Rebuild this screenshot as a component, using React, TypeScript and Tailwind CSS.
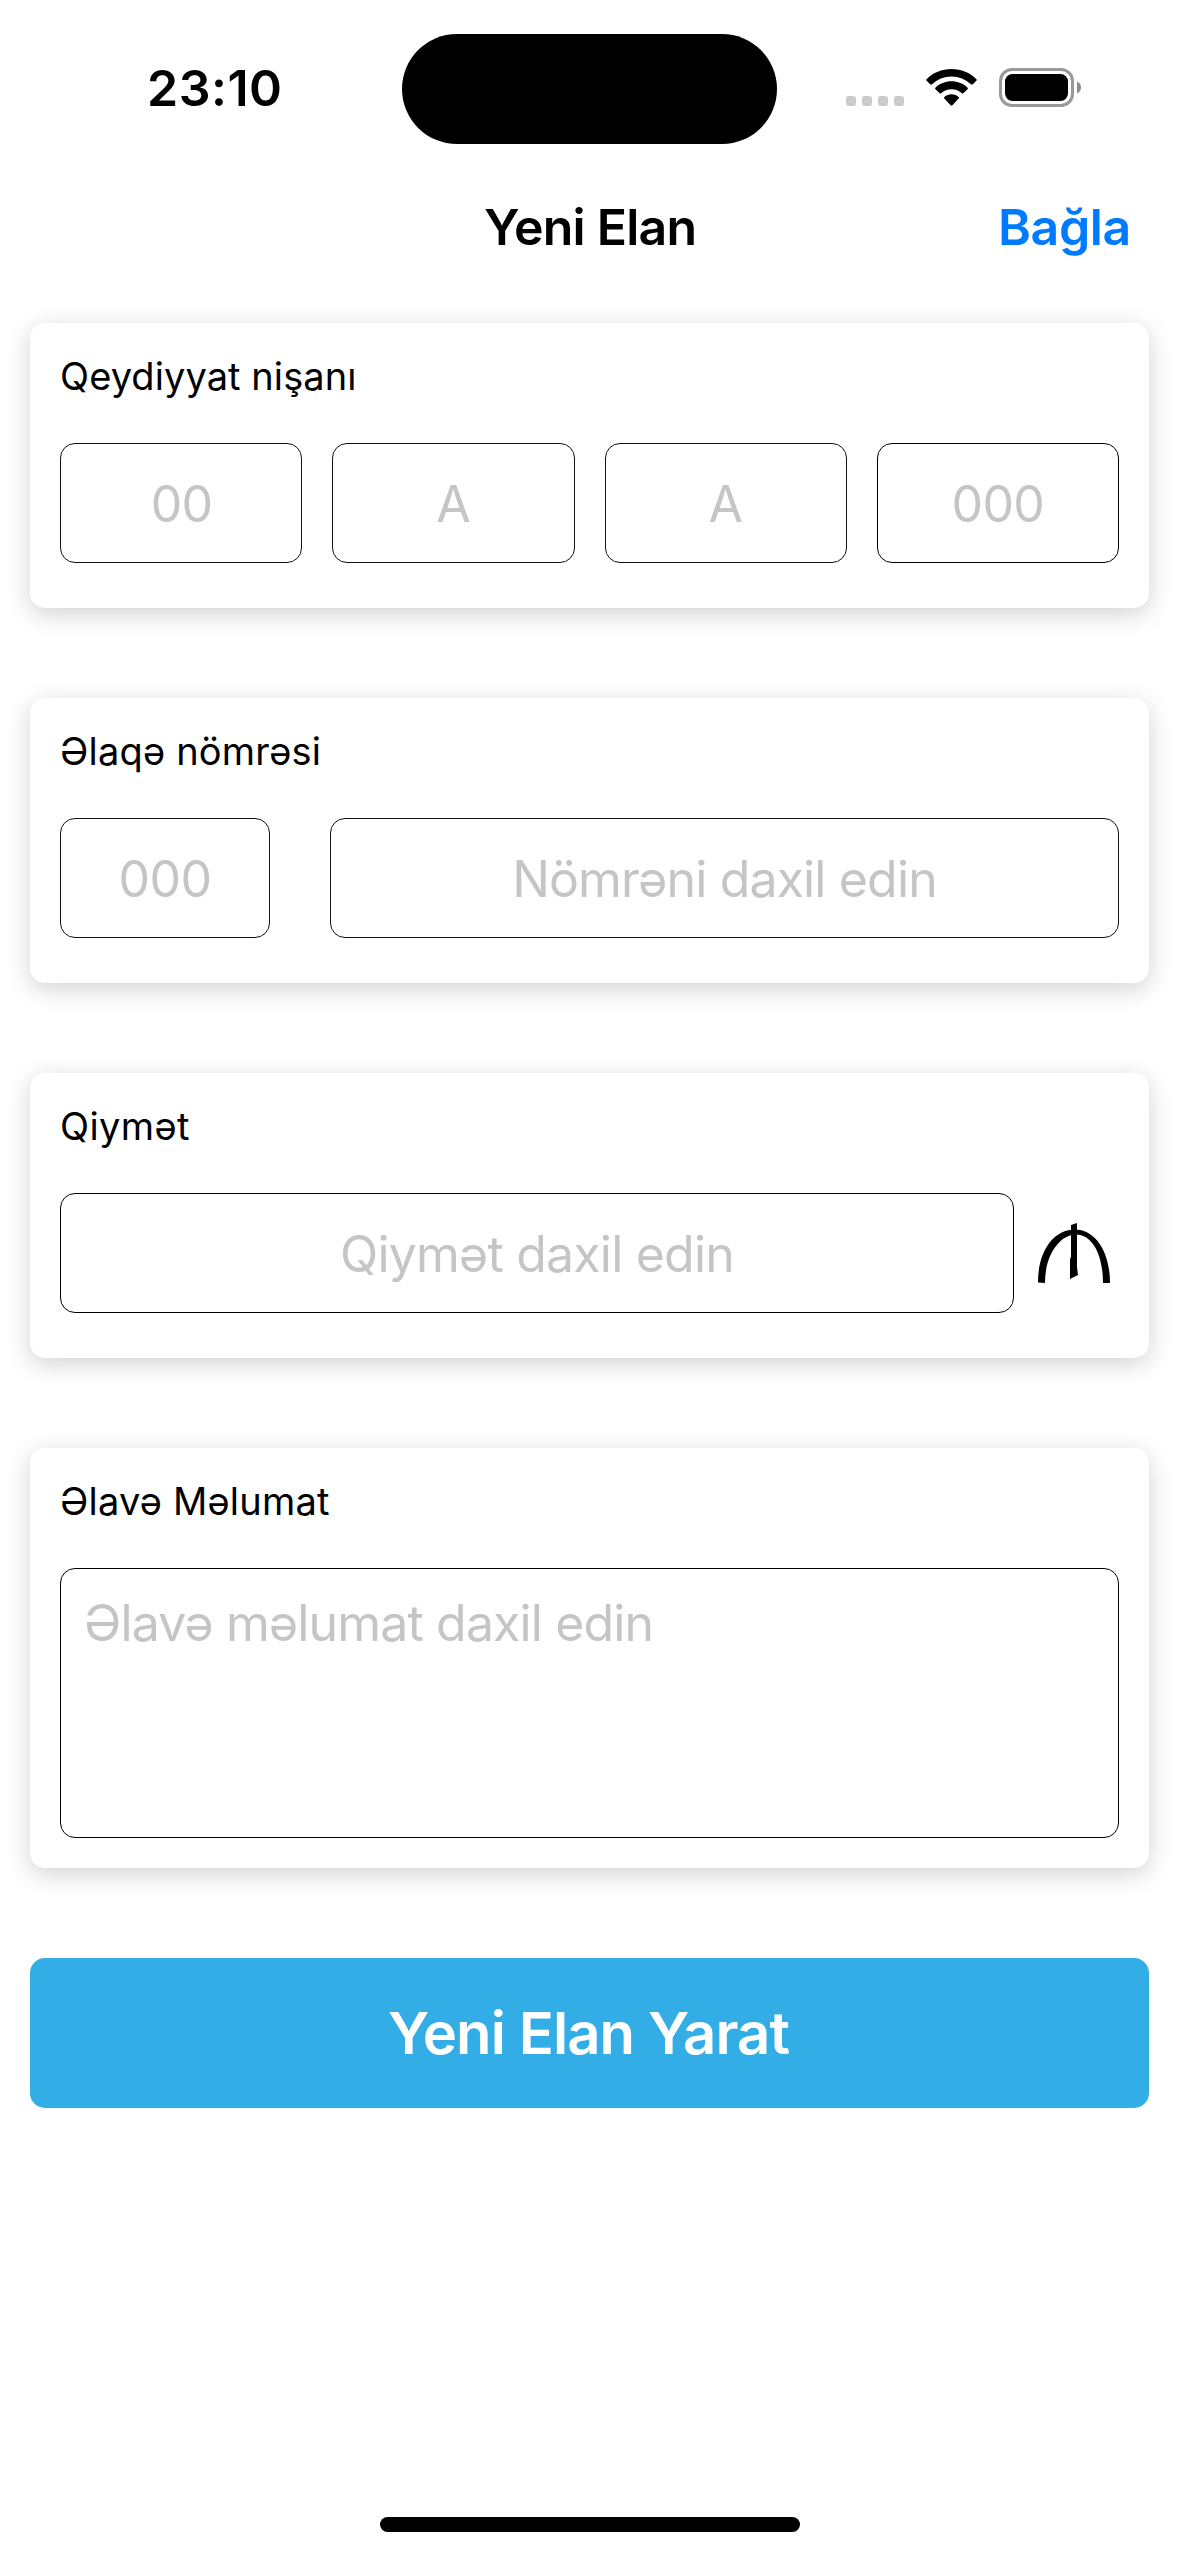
import React from "react";

function Card({ title, className, children }: { title: string; className: string; children: React.ReactNode }) {
  return (
    <section className="shrink-0 rounded-[15px] bg-white px-[30px] pt-[29px] pb-[30px] shadow-[0_6px_24px_rgba(0,0,0,0.18)]">
      <h2 className={`mb-[43px] h-12 text-[38px] leading-[48px] whitespace-nowrap ${className}`}>{title}</h2>
      {children}
    </section>
  );
}

function Field({ text, className }: { text: string; className: string }) {
  return (
    <div className={`flex h-[120px] items-center justify-center rounded-[15px] border pt-[2px] text-[50px] leading-[60px] whitespace-nowrap text-[#c5c5c7] ${className}`}>
      {text}
    </div>
  );
}

function StatusBar() {
  return (
    <header className="flex h-[177px] shrink-0 items-start pt-[34px]">
      <div className="w-[402px] pt-[24px] pl-[147px] text-[50px] leading-[60px] font-semibold tracking-[0.49px]">23:10</div>
      <div className="h-[110px] w-[375px] rounded-full bg-black" />
      <div className="ml-[69px] flex gap-[6px] pt-[62px]">
        <i className="size-[10px] rounded-[3px] bg-[#cbcbcb]" />
        <i className="size-[10px] rounded-[3px] bg-[#cbcbcb]" />
        <i className="size-[10px] rounded-[3px] bg-[#cbcbcb]" />
        <i className="size-[10px] rounded-[3px] bg-[#cbcbcb]" />
      </div>
      <svg className="mt-[35px] ml-[22px] h-[37px] w-[51px]" viewBox="0 0 51 37">
        <path d="M25.5 0C35.3 0 44 3.8 50.2 9.9c.7.7.7 1.3.1 1.9l-3.500 3.500c-.6.6-1.200.6-1.800 0C39.700 10.400 33 7.400 25.500 7.400S11.300 10.400 6 15.300c-.6.6-1.200.6-1.800 0L.7 11.800c-.6-.6-.6-1.200.1-1.900C7 3.800 15.700 0 25.500 0Z" />
        <path d="M25.5 12.300c6.200 0 11.700 2.300 15.900 6.200.7.700.7 1.200.1 1.800L37.600 24.100c-.6.600-1.200.6-1.800.1-2.700-2.500-6.300-4-10.300-4s-7.600 1.500-10.300 4c-.6.500-1.200.5-1.800-.1L9.500 20.300c-.6-.6-.6-1.100.1-1.800 4.200-3.900 9.700-6.200 15.900-6.200Z" />
        <path d="M25.5 25.200c2.700 0 5.200 1 7.100 2.700.6.500.6 1.100 0 1.700l-6.200 6.700c-.6.600-1.200.6-1.800 0l-6.200-6.700c-.6-.6-.6-1.200 0-1.700 1.900-1.700 4.400-2.700 7.100-2.700Z" />
      </svg>
      <svg className="mt-[34px] ml-[22px] h-[39px] w-[82px]" viewBox="0 0 82 39">
        <rect x="1.500" y="1.500" width="72" height="36" rx="11.500" fill="none" stroke="#999" strokeWidth="3" />
        <rect x="6" y="6" width="63" height="27" rx="7.500" />
        <path d="M78 13.500c2.500 1 4 3.300 4 6s-1.500 5-4 6Z" fill="#8c8c8c" />
      </svg>
    </header>
  );
}

export default function App() {
  return (
    <main className="flex h-[2556px] w-[1179px] flex-col overflow-hidden bg-white font-['Inter',sans-serif] text-black">
      <StatusBar />
      <nav className="flex h-[146px] shrink-0 items-start pt-[20px] text-[50px] leading-[60px] font-semibold whitespace-nowrap">
        <h1 className="ml-[484px] w-[514px] tracking-[-0.77px]">Yeni Elan</h1>
        <a className="tracking-[-0.38px] text-[#007aff]">Bağla</a>
      </nav>
      <form className="flex flex-col gap-[90px] px-[30px]">
        <Card title="Qeydiyyat nişanı" className="tracking-[0.08px]">
          <div className="grid grid-cols-4 gap-[30px]">
            <Field text="00" className="border-[#111] pl-px tracking-[-0.7px]" />
            <Field text="A" className="border-[#111]" />
            <Field text="A" className="border-[#111]" />
            <Field text="000" className="border-black tracking-[-0.6px]" />
          </div>
          <div className="h-[15px]" />
        </Card>
        <Card title="Əlaqə nömrəsi" className="tracking-[0.2px]">
          <div className="flex gap-[60px]">
            <Field text="000" className="w-[210px] border-[#111] tracking-[-0.6px]" />
            <Field text="Nömrəni daxil edin" className="flex-1 border-[#111] tracking-[-0.85px]" />
          </div>
          <div className="h-[15px]" />
        </Card>
        <Card title="Qiymət" className="tracking-[0.39px]">
          <div className="flex">
            <Field text="Qiymət daxil edin" className="w-[954px] border-black tracking-[-0.8px]" />
            <svg className="mt-[30px] ml-[24px] h-[60px] w-[72px]" viewBox="0 0 72 60">
              <path d="M0 59.500C0 26 17 6.500 37 6.500S72 28 72 60H65C65 30 53.500 11.500 38 11.500S7 31 7 60Z" />
              <path d="M33 2 39 0V44L40 52 32 56V36L33 34Z" />
            </svg>
          </div>
          <div className="h-[15px]" />
        </Card>
        <Card title="Əlavə Məlumat" className="tracking-[0.2px]">
          <div className="h-[270px] rounded-[15px] border border-black pt-[24px] pl-[23px] text-[50px] leading-[60px] tracking-[-0.85px] text-[#c5c5c7]">
            Əlavə məlumat daxil edin
          </div>
        </Card>
        <button type="button" className="flex h-[150px] items-center justify-center rounded-[15px] bg-[#32ade6] pr-[2px] text-[58px] font-semibold tracking-[-0.9px] text-white">
          Yeni Elan Yarat
        </button>
      </form>
      <div className="mt-auto mb-[24px] h-[15px] w-[420px] shrink-0 self-center rounded-full bg-black" />
    </main>
  );
}
